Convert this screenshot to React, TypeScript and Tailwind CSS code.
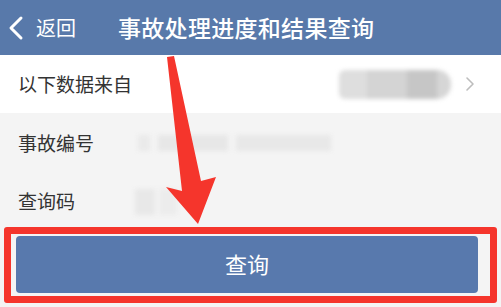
import React from 'react';

const App: React.FC = () => {
  return (
    <div
      className="relative w-[501px] h-[307px] overflow-hidden bg-[#f4f4f4]"
      style={{ fontFamily: '"Noto Sans CJK SC", "Noto Sans", sans-serif' }}
    >
      {/* header */}
      <div className="h-[55px] bg-[#5879aa] flex items-center text-white">
        <div className="flex items-center pl-[8px] w-[118px]">
          <svg width="17" height="26" viewBox="0 0 17 26" className="mr-[11px]">
            <path d="M13 3 L3 13 L13 23" fill="none" stroke="white" strokeWidth="3" strokeLinecap="round" strokeLinejoin="round" />
          </svg>
          <span className="text-[20px] leading-none">返回</span>
        </div>
        <span className="text-[23px] font-medium leading-none tracking-[0.3px]">事故处理进度和结果查询</span>
      </div>

      {/* row 1 */}
      <div className="h-[58px] bg-white flex items-center pl-[18px] pr-[26px]">
        <span className="text-[19px] text-[#333] flex-1">以下数据来自</span>
        <div className="flex items-center mr-[14px] blur-[2px]">
          <div className="w-[28px] h-[29px] bg-[#dedede] rounded-l-[6px]" />
          <div className="w-[40px] h-[29px] bg-[#d4d4d4]" />
          <div className="w-[30px] h-[29px] bg-[#c6c6c6]" />
          <div className="w-[14px] h-[29px] bg-[#d6d6d6] rounded-r-[14px]" />
        </div>
        <svg width="10" height="16" viewBox="0 0 10 16">
          <path d="M2 2 L8 8 L2 14" fill="none" stroke="#bdbdbd" strokeWidth="1.6" strokeLinecap="round" strokeLinejoin="round" />
        </svg>
      </div>

      {/* row 2 */}
      <div className="h-[60px] flex items-center pl-[18px] pr-[20px]">
        <span className="text-[19px] text-[#333] w-[120px]">事故编号</span>
        <div className="flex items-center gap-[8px] blur-[2px]">
          <div className="w-[12px] h-[16px] bg-[#eaeaea]" />
          <div className="w-[70px] h-[16px] bg-[#e7e7e7]" />
          <div className="w-[95px] h-[16px] bg-[#e8e8e8]" />
        </div>
      </div>

      {/* row 3 */}
      <div className="h-[57px] flex items-center pl-[18px] pr-[20px]">
        <span className="text-[19px] text-[#333] w-[117px]">查询码</span>
        <div className="flex items-center gap-[4px] blur-[2px]">
          <div className="w-[20px] h-[26px] bg-[#e8e8e8]" />
          <div className="w-[18px] h-[26px] bg-[#ececec]" />
        </div>
      </div>

      {/* button */}
      <div className="px-[16px] pr-[23px] pt-[6px]">
        <div className="h-[57px] bg-[#5879ad] rounded-[4px] flex items-center justify-center pb-[4px]">
          <span className="text-white text-[22px] leading-none">查询</span>
        </div>
      </div>

      {/* annotation box */}
      <div className="absolute left-[4px] top-[227px] w-[493px] h-[76px] border-[7px] border-[#f5352c] rounded-[3px]" />

      {/* annotation arrow */}
      <svg className="absolute left-0 top-0" width="501" height="307" viewBox="0 0 501 307">
        <polygon
          points="167,57 174,56 201,181 216,177 198,224 166,187 182,191"
          fill="#f5352c"
          strokeLinejoin="round"
        />
      </svg>
    </div>
  );
};

export default App;
